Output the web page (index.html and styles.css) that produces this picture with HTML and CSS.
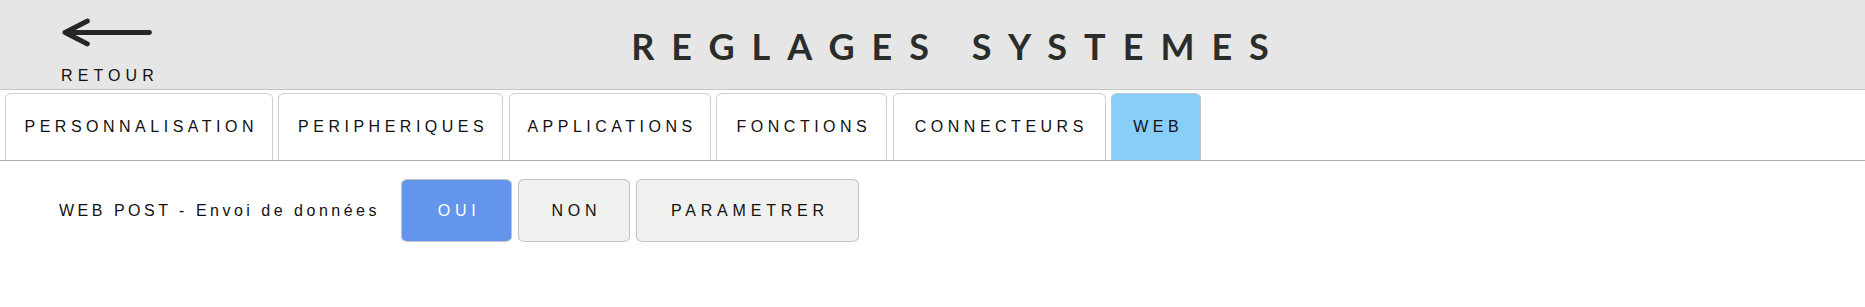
FILE: index.html
```html
<!DOCTYPE html>
<html lang="fr">
<head>
<meta charset="utf-8">
<title>Réglages systèmes</title>
<link rel="stylesheet" href="styles.css">
</head>
<body>
<header class="topbar">
  <a class="back" href="#">
    <svg class="back-icon" width="95" height="35" viewBox="0 0 95 35" aria-hidden="true">
      <path d="M5 17.5 H89.5 M5 17.5 L27.5 6 M5 17.5 L27.5 29" fill="none" stroke="#262626" stroke-width="4.8" stroke-linecap="round" stroke-linejoin="round"/>
    </svg>
    <span class="back-label">RETOUR</span>
  </a>
  <h1 class="title">REGLAGES SYSTEMES</h1>
</header>
<nav class="tabs">
  <a class="tab" href="#">PERSONNALISATION</a>
  <a class="tab" href="#">PERIPHERIQUES</a>
  <a class="tab" href="#">APPLICATIONS</a>
  <a class="tab" href="#">FONCTIONS</a>
  <a class="tab" href="#">CONNECTEURS</a>
  <a class="tab tab-active" href="#">WEB</a>
</nav>
<main class="content">
  <div class="setting-row">
    <span class="setting-label">WEB POST - Envoi de données</span>
    <div class="choices">
      <button class="choice choice-on" type="button">OUI</button>
      <button class="choice choice-mid" type="button">NON</button>
      <button class="choice choice-wide" type="button">PARAMETRER</button>
    </div>
  </div>
</main>
</body>
</html>
```
FILE: styles.css
```css
* {
  box-sizing: border-box;
}

html,
body {
  margin: 0;
  padding: 0;
  background: #ffffff;
}

body {
  width: 1865px;
  font-family: "Liberation Sans", Arial, sans-serif;
  color: #111111;
}

/* ---------- header ---------- */
.topbar {
  display: grid;
  grid-template-columns: 200px 1fr;
  padding-right: 156px;
  height: 90px;
  background: #e6e6e6;
  border-bottom: 1px solid #c6c6c6;
}

.back {
  display: flex;
  flex-direction: column;
  align-items: flex-start;
  padding: 15px 0 0 60px;
  color: #111111;
  text-decoration: none;
}

.back-icon {
  display: block;
}

.back-label {
  margin-top: 17px;
  margin-left: 1px;
  font-size: 16px;
  line-height: 18px;
  letter-spacing: 5.1px;
}

.title {
  margin: 0;
  padding-top: 25px;
  padding-left: 8px;
  font-family: Lato, "Open Sans", sans-serif;
  font-weight: 700;
  font-size: 36px;
  line-height: 42px;
  letter-spacing: 17px;
  color: #2a2d29;
  text-align: center;
}

/* ---------- tabs ---------- */
.tabs {
  display: grid;
  grid-template-columns: 268px 225px 202px 171px 213px 90px;
  column-gap: 5.4px;
  height: 68px;
  margin-top: 3px;
  padding-left: 5px;
  border-bottom: 1px solid #ababab;
}

.tab {
  display: flex;
  align-items: center;
  justify-content: center;
  padding-left: 4.5px;
  border: 1px solid #d0d0d0;
  border-bottom: none;
  border-radius: 7px 7px 0 0 / 5px 5px 0 0;
  background: #ffffff;
  color: #111111;
  font-size: 16px;
  letter-spacing: 4.5px;
  text-decoration: none;
}

.tab-active {
  background: #87cefa;
  border-color: #b9c9d3;
}

/* ---------- content ---------- */
.setting-row {
  display: flex;
  align-items: center;
  padding: 18px 0 0 59px;
}

.setting-label {
  margin-right: 21.5px;
  font-size: 16px;
  letter-spacing: 3.5px;
}

.choices {
  display: flex;
  gap: 6px;
}

.choice {
  height: 63px;
  padding: 0 0 0 4.8px;
  border: 1px solid #c3c3c3;
  border-radius: 7px / 5px;
  background: #eef1ee;
  color: #111111;
  font-family: "Liberation Sans", Arial, sans-serif;
  font-size: 16px;
  letter-spacing: 4.8px;
}

.choice-on {
  width: 110.6px;
  background: #6495ed;
  color: #ffffff;
}

.choice-mid {
  width: 112px;
}

.choice-wide {
  width: 223px;
}
```
